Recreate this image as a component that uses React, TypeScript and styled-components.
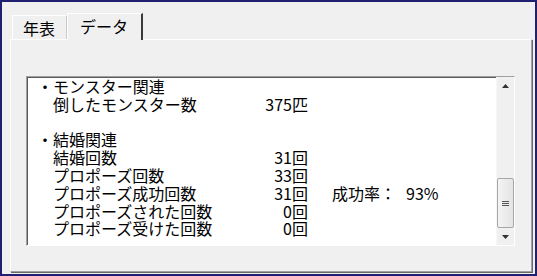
import React from "react";
import styled, { createGlobalStyle } from "styled-components";

type Item = {
  label: string;
  value: string;
  extra?: string;
};

type Section = {
  title: string;
  items: Item[];
};

const sections: Section[] = [
  {
    title: "モンスター関連",
    items: [{ label: "倒したモンスター数", value: "375匹" }],
  },
  {
    title: "結婚関連",
    items: [
      { label: "結婚回数", value: "31回" },
      { label: "プロポーズ回数", value: "33回" },
      { label: "プロポーズ成功回数", value: "31回", extra: "93%" },
      { label: "プロポーズされた回数", value: "0回" },
      { label: "プロポーズ受けた回数", value: "0回" },
    ],
  },
];

const GlobalStyle = createGlobalStyle`
  html, body {
    margin: 0;
    padding: 0;
    background: #f0f0f0;
  }
  body {
    font-family: "Noto Sans CJK JP", "Noto Sans", sans-serif;
    color: #000;
  }
`;

export default function App() {
  return (
    <>
      <GlobalStyle />
      <Window>
        <TabBar>
          <Tab>年表</Tab>
          <Tab $active>データ</Tab>
        </TabBar>
        <Panel>
          <ListBox>
            <ListContent>
              {sections.map((section, i) => (
                <React.Fragment key={section.title}>
                  {i > 0 && <Blank />}
                  <Heading>・{section.title}</Heading>
                  {section.items.map((item) => (
                    <Row key={item.label}>
                      <Label>{item.label}</Label>
                      <Value>{item.value}</Value>
                      {item.extra && (
                        <Rate>
                          成功率：<RateNum>{item.extra}</RateNum>
                        </Rate>
                      )}
                    </Row>
                  ))}
                </React.Fragment>
              ))}
            </ListContent>
            <ScrollBar>
              <ArrowButton>
                <svg width="7" height="4" viewBox="0 0 7 4">
                  <path d="M0 4 L3.5 0 L7 4 Z" fill="#333" />
                </svg>
              </ArrowButton>
              <Track>
                <Thumb>
                  <Grip />
                  <Grip />
                  <Grip />
                </Thumb>
              </Track>
              <ArrowButton>
                <svg width="7" height="4" viewBox="0 0 7 4">
                  <path d="M0 0 L3.5 4 L7 0 Z" fill="#333" />
                </svg>
              </ArrowButton>
            </ScrollBar>
          </ListBox>
        </Panel>
      </Window>
    </>
  );
}

const Window = styled.div`
  width: 537px;
  height: 276px;
  box-sizing: border-box;
  border: 2px solid #202070;
  background: #f0f0f0;
  padding: 11px 3px 2px 8px;
  display: flex;
  flex-direction: column;
`;

const TabBar = styled.div`
  display: flex;
  align-items: flex-end;
  height: 26px;
  padding-left: 2px;
  position: relative;
  z-index: 1;
`;

const Tab = styled.div<{ $active?: boolean }>`
  box-sizing: border-box;
  width: ${(p) => (p.$active ? "76px" : "55px")};
  height: ${(p) => (p.$active ? "27px" : "24px")};
  margin-bottom: ${(p) => (p.$active ? "-1px" : "0")};
  padding-left: ${(p) => (p.$active ? "12px" : "10px")};
  border-top: 1px solid #fff;
  border-left: 1px solid #fff;
  border-right: ${(p) =>
    p.$active ? "2px solid #3a3a3a" : "1px solid #c8c8c8"};
  background: #f0f0f0;
  font-size: 16px;
  line-height: 24px;
  white-space: nowrap;
`;

const Panel = styled.div`
  flex: 1;
  box-sizing: border-box;
  border-top: 1px solid #fff;
  border-left: 1px solid #fff;
  border-right: 1px solid #a0a0a0;
  border-bottom: 1px solid #a0a0a0;
  box-shadow: 1px 1px 0 #696969;
  padding: 36px 0 0 15px;
`;

const ListBox = styled.div`
  width: 489px;
  height: 170px;
  box-sizing: border-box;
  border-top: 1px solid #a0a0a0;
  border-left: 1px solid #a0a0a0;
  border-right: 1px solid #fff;
  border-bottom: 1px solid #fff;
  box-shadow: inset 1px 1px 0 #5a5a5a;
  background: #fff;
  display: flex;
`;

const ListContent = styled.div`
  flex: 1;
  padding: 1px 0 0 10px;
  font-size: 16px;
  line-height: 17.8px;
`;

const Blank = styled.div`
  height: 17.8px;
`;

const Heading = styled.div`
  white-space: nowrap;
`;

const Row = styled.div`
  display: grid;
  grid-template-columns: 16px 200px 55px 24px auto;
  white-space: nowrap;
`;

const Label = styled.span`
  grid-column: 2;
`;

const Value = styled.span`
  grid-column: 3;
  text-align: right;
`;

const Rate = styled.span`
  grid-column: 5;
`;

const RateNum = styled.span`
  margin-left: 10px;
`;

const ScrollBar = styled.div`
  width: 17px;
  display: flex;
  flex-direction: column;
  background: #f0f0f0;
  border-left: 1px solid #f7f7f7;
`;

const ArrowButton = styled.div`
  height: 17px;
  display: flex;
  align-items: center;
  justify-content: center;
`;

const Track = styled.div`
  flex: 1;
  display: flex;
  flex-direction: column;
  justify-content: flex-end;
`;

const Thumb = styled.div`
  height: 50px;
  box-sizing: border-box;
  border: 1px solid #a6a6a6;
  border-radius: 2px;
  background: linear-gradient(to right, #f4f4f4, #e4e4e4);
  display: flex;
  flex-direction: column;
  align-items: center;
  justify-content: center;
  gap: 1px;
`;

const Grip = styled.div`
  width: 7px;
  height: 1px;
  background: #555;
`;
